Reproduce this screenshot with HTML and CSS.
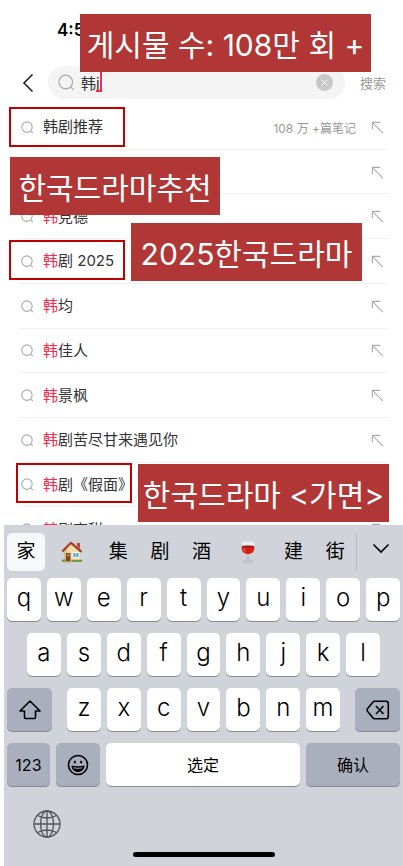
FILE: index.html
```html
<!DOCTYPE html>
<html lang="zh-CN">
<head>
<meta charset="utf-8">
<meta name="viewport" content="width=device-width, initial-scale=1">
<title>搜索</title>
<link rel="stylesheet" href="styles.css">
</head>
<body>
<svg class="defs" width="0" height="0" aria-hidden="true">
  <symbol id="lens" viewBox="0 0 14 14"><circle cx="6.4" cy="6.6" r="5.6"/><path d="M10.6 10.8 12.8 13"/></symbol>
  <symbol id="fill" viewBox="0 0 14 14"><path d="M1.5 9V1.5H10M1.8 1.8 12.8 13"/></symbol>
</svg>
<div class="app">
  <header class="status"><time>4:5</time></header>
  <form class="search">
    <button class="back" type="button" aria-label="返回"><svg width="12" height="20" viewBox="0 0 12 20"><path d="M10.5 1.5 2 10l8.500 8.500"/></svg></button>
    <div class="field">
      <svg class="lens" width="17" height="17"><use href="#lens"/></svg>
      <input type="text" value="韩j" aria-label="搜索">
      <span class="caret"></span>
      <button class="clear" type="button" aria-label="清除"><svg width="17" height="17" viewBox="0 0 17 17"><circle cx="8.500" cy="8.500" r="8.500"/><path d="m5.500 5.500 6 6m0-6-6 6"/></svg></button>
    </div>
    <button class="submit" type="submit">搜索</button>
  </form>
  <main class="results">
    <ul class="list">
      <li><svg class="ico"><use href="#lens"/></svg><a href="#">韩剧推荐</a><small>108 万 +篇笔记</small><svg class="ico"><use href="#fill"/></svg></li>
      <li><svg class="ico"><use href="#lens"/></svg><a href="#" aria-label="韩"></a><svg class="ico"><use href="#fill"/></svg></li>
      <li><svg class="ico"><use href="#lens"/></svg><a href="#"><em>韩</em>竞德</a><svg class="ico"><use href="#fill"/></svg></li>
      <li><svg class="ico"><use href="#lens"/></svg><a href="#"><em>韩</em>剧 2025</a><svg class="ico"><use href="#fill"/></svg></li>
      <li><svg class="ico"><use href="#lens"/></svg><a href="#"><em>韩</em>均</a><svg class="ico"><use href="#fill"/></svg></li>
      <li><svg class="ico"><use href="#lens"/></svg><a href="#"><em>韩</em>佳人</a><svg class="ico"><use href="#fill"/></svg></li>
      <li><svg class="ico"><use href="#lens"/></svg><a href="#"><em>韩</em>景枫</a><svg class="ico"><use href="#fill"/></svg></li>
      <li><svg class="ico"><use href="#lens"/></svg><a href="#"><em>韩</em>剧苦尽甘来遇见你</a><svg class="ico"><use href="#fill"/></svg></li>
      <li><svg class="ico"><use href="#lens"/></svg><a href="#"><em>韩</em>剧《假面》</a><svg class="ico"><use href="#fill"/></svg></li>
      <li><svg class="ico"><use href="#lens"/></svg><a href="#"><em>韩</em>剧高甜</a><svg class="ico"><use href="#fill"/></svg></li>
    </ul>
  </main>

  <section class="keyboard" aria-label="键盘">
    <div class="candidates">
      <button class="picked">家</button>
      <button class="emoji" aria-label="房子"><svg width="22" height="22" viewBox="0 0 22 22">
        <path fill="#b5482f" d="M16 2h3v6l-3-3z"/><path fill="#f1dca6" d="M3 9 10 2l9 8v10H3z"/><path fill="#d9bd84" d="M3 9 6 6v14H3z"/>
        <path fill="none" stroke="#a83c2c" stroke-width="2.200" stroke-linejoin="round" d="M1.200 10.500 10 1.800l10.500 9"/>
        <path fill="#7d4226" d="M5 12h4.500v8H5z"/><path fill="#bd7b4a" d="M6 13h2.500v2.500H6z"/><path fill="#fff" d="M11.500 11.200h6.500v5.600h-6.500z"/><path fill="#4fa3d8" d="M12.300 12h2.200v4h-2.200zm2.900 0h2.200v4h-2.200z"/>
        <path fill="#6f9e3c" d="M1 18.500h3.500V21H1zm9.500.3H21V21H10.500z"/><path fill="#b99a72" d="M4.500 20H10v1.500H4.500z"/></svg></button>
      <button>集</button>
      <button>剧</button>
      <button>酒</button>
      <button class="emoji" aria-label="红酒"><svg width="16" height="22" viewBox="0 0 16 22">
        <path fill="#e9edf0" d="M2.500.5h11L14.500 7c0 4-3 6.500-6.500 6.500S1.500 11 1.500 7z"/><path fill="#d81e19" d="M1.700 5.500h12.600c.8 5-2.300 7.500-6.300 7.500S.9 10.500 1.700 5.500z"/><ellipse cx="8" cy="5.500" rx="6.200" ry="1" fill="#8e1512"/>
        <path fill="#f77" d="M3.300 7.500h1.200c0 1.700.5 2.700 1.500 3.700-1.700-.6-2.700-2-2.700-3.700z"/><path fill="#cfd4d8" stroke="#9ca2a8" stroke-width=".5" d="M7.300 13.500h1.400v5.700c1.600.1 4.300.4 4.300 1.200 0 1.300-10 1.300-10 0 0-.8 2.700-1.100 4.300-1.200z"/></svg></button>
      <button>建</button>
      <button>街</button>
      <button class="more" aria-label="展开"><svg width="18" height="11" viewBox="0 0 18 11"><path d="m1.500 1.500 7.500 7.500 7.500-7.500"/></svg></button>
    </div>
    <div class="keys"><button>q</button><button>w</button><button>e</button><button>r</button><button>t</button><button>y</button><button>u</button><button>i</button><button>o</button><button>p</button></div>
    <div class="keys middle"><button>a</button><button>s</button><button>d</button><button>f</button><button>g</button><button>h</button><button>j</button><button>k</button><button>l</button></div>
    <div class="keys lower">
      <button class="dark" aria-label="Shift"><svg width="22" height="20" viewBox="0 0 22 20"><path d="M11 1 21 11h-4.500v6.500q0 1-1 1h-9q-1 0-1-1V11H1z"/></svg></button>
      <div class="keys"><button>z</button><button>x</button><button>c</button><button>v</button><button>b</button><button>n</button><button>m</button></div>
      <button class="dark" aria-label="删除"><svg width="24" height="20" viewBox="0 0 24 20"><path d="M8.500 1.200H20q2.300 0 2.300 2.300v13q0 2.300-2.300 2.300H8.500Q7.600 18.800 7 18L1.500 11.200q-.8-1.200 0-2.400L7 2q.6-.8 1.500-.8zM10 6l7.500 8m0-8L10 14"/></svg></button>
    </div>
    <div class="keys bottom">
      <button class="dark">123</button>
      <button class="dark" aria-label="表情"><svg width="22" height="22" viewBox="0 0 22 22"><circle cx="11" cy="11" r="9.500"/><ellipse class="ink" cx="7.800" cy="8" rx="1.100" ry="1.500"/><ellipse class="ink" cx="14.200" cy="8" rx="1.100" ry="1.500"/><path class="ink" d="M4.500 11.500q6.500 1.600 13 0c0 4-3 6.500-6.500 6.500s-6.500-2.500-6.500-6.500z"/><path class="teeth" d="M6.500 13.800q4.500 1 9 0"/></svg></button>
      <button>选定</button>
      <button class="dark">确认</button>
    </div>
    <div class="system"><button aria-label="切换键盘"><svg width="28" height="28" viewBox="0 0 28 28"><circle cx="14" cy="14" r="13"/><ellipse cx="14" cy="14" rx="6.500" ry="13"/><path d="M14 1v26M1 14h26M4.500 5.500q9.500 5 19 0M4.500 22.500q9.500-5 19 0"/></svg></button></div>
    <div class="home"></div>
  </section>

  <div class="frame frame-a"></div>
  <div class="frame frame-b"></div>
  <div class="frame frame-c"></div>
  <div class="note note-a" lang="ko">게시물 수: 108만 회 +</div>
  <div class="note note-b" lang="ko">한국드라마추천</div>
  <div class="note note-c" lang="ko">2025한국드라마</div>
  <div class="note note-d" lang="ko">한국드라마 &lt;가면&gt;</div>
</div>
</body>
</html>
```

FILE: styles.css
```css
* { box-sizing: border-box; }
body { margin: 0; background: #fff; font-family: Inter, "Noto Sans CJK SC", sans-serif; color: #333; }
button, input { margin: 0; padding: 0; border: 0; background: none; font: inherit; color: inherit; }
button { display: flex; align-items: center; justify-content: center; white-space: nowrap; }
svg { fill: none; flex: none; }
.defs { position: absolute; }

.app { position: relative; display: flex; flex-direction: column; height: 100vh; overflow: hidden; }

.status { height: 66px; padding: 19px 0 0 57px; font-size: 17px; line-height: 22px; font-weight: 600; color: #000; }

.search { display: flex; align-items: center; height: 33px; padding: 0 17px 0 22px; }
.back { width: 12px; margin-right: 14px; }
.back svg { stroke: #222; stroke-width: 1.6; }
.field { position: relative; flex: 1; min-width: 0; display: flex; align-items: center; height: 33px; padding: 0 12px 0 10px; border-radius: 17px; background: #f4f4f4; }
.lens { stroke: #aaa; stroke-width: 1; }
.field input { flex: 1; min-width: 0; margin-left: 6px; height: 24px; font-size: 15px; outline: 0; }
.caret { position: absolute; left: 48px; top: 6px; width: 6px; height: 20px; border-right: 2px solid #f8284d; border-bottom: 2px solid #f8284d; }
.clear circle { fill: #c8c8c8; }
.clear path { stroke: #fff; stroke-width: 1; }
.submit { margin-left: 15px; font-size: 13px; color: #999; }

.results { flex: 1; min-height: 0; padding-top: 6px; overflow: hidden; }
.list { display: grid; grid-auto-rows: 1fr; height: 447px; margin: 0 15px 0 19px; padding: 0; list-style: none; }
.list li { display: flex; align-items: center; padding: 1px 4px 0 2px; border-bottom: 1px solid #f2f2f2; }
.list a { flex: 1; margin-left: 9px; font-size: 15px; line-height: 22px; color: #333; text-decoration: none; }
.list em { font-style: normal; color: #ff2748; }
.list small { margin-right: 15px; font-size: 12px; color: #999; }
.ico { width: 13px; height: 13px; stroke: #aaa; stroke-width: 1.2; }

.keyboard { margin-left: 4px; padding: 8px 3px; height: 341px; background: #d0d3da; color: #000; }
.candidates { display: flex; height: 38px; margin-bottom: 7px; }
.candidates button { flex: 42; font-size: 19px; line-height: 24px; }
.candidates .emoji { flex: 51; }
.candidates .picked { flex: none; width: 38px; margin-right: 2px; border-radius: 5px; background: #f7f8fa; }
.candidates .more { flex: none; width: 44px; padding: 0 0 8px 4px; border-left: 1px solid #b5b8bf; }
.more svg { stroke: #000; stroke-width: 1.6; }

.keys { display: flex; gap: 6px; margin-bottom: 12px; }
.keys button { flex: 1; height: 43px; border-radius: 5px; background: #fff; box-shadow: 0 1px 0 #888a8e; font-size: 24px; font-weight: 300; line-height: 28px; }
.keys > button:not(.dark) { padding-bottom: 4px; }
.middle { padding: 0 20px; }
.keys .dark { background: #a9afbc; }
.keys svg { stroke: #000; stroke-width: 1.6; stroke-linejoin: round; }
.lower { gap: 15px; }
.lower > .dark { flex: none; width: 45px; }
.lower > .keys { flex: 1; margin: 0; }
.bottom { display: grid; grid-template-columns: 43fr 44fr 195fr 94fr; margin-bottom: 24px; }
.keys.bottom button { padding: 0; font-size: 16px; font-weight: 400; }
.bottom .ink { fill: #000; stroke: none; }
.bottom .teeth { stroke: #a9afbc; stroke-width: 1; }
.system { padding-left: 26px; }
.system svg { stroke: #50545c; stroke-width: 1.3; }
.home { width: 142px; height: 5px; margin: 14px auto 0; border-radius: 3px; background: #000; }

.frame { position: absolute; width: 116px; height: 40px; border: 2px solid #c00000; }
.frame-a { left: 9px; top: 107px; }
.frame-b { left: 9px; top: 240px; }
.frame-c { left: 16px; top: 463px; }
.note { position: absolute; height: 58px; background: #b03735; color: #fff; font-family: Inter, "Noto Sans CJK KR", sans-serif; font-size: 30px; font-weight: 400; line-height: 62px; text-align: center; white-space: nowrap; }
.note-a { left: 80px; top: 14px; width: 291px; }
.note-b { left: 10px; top: 157px; width: 210px; }
.note-c { left: 131px; top: 223px; width: 231px; }
.note-d { left: 138px; top: 464px; width: 251px; }
```
